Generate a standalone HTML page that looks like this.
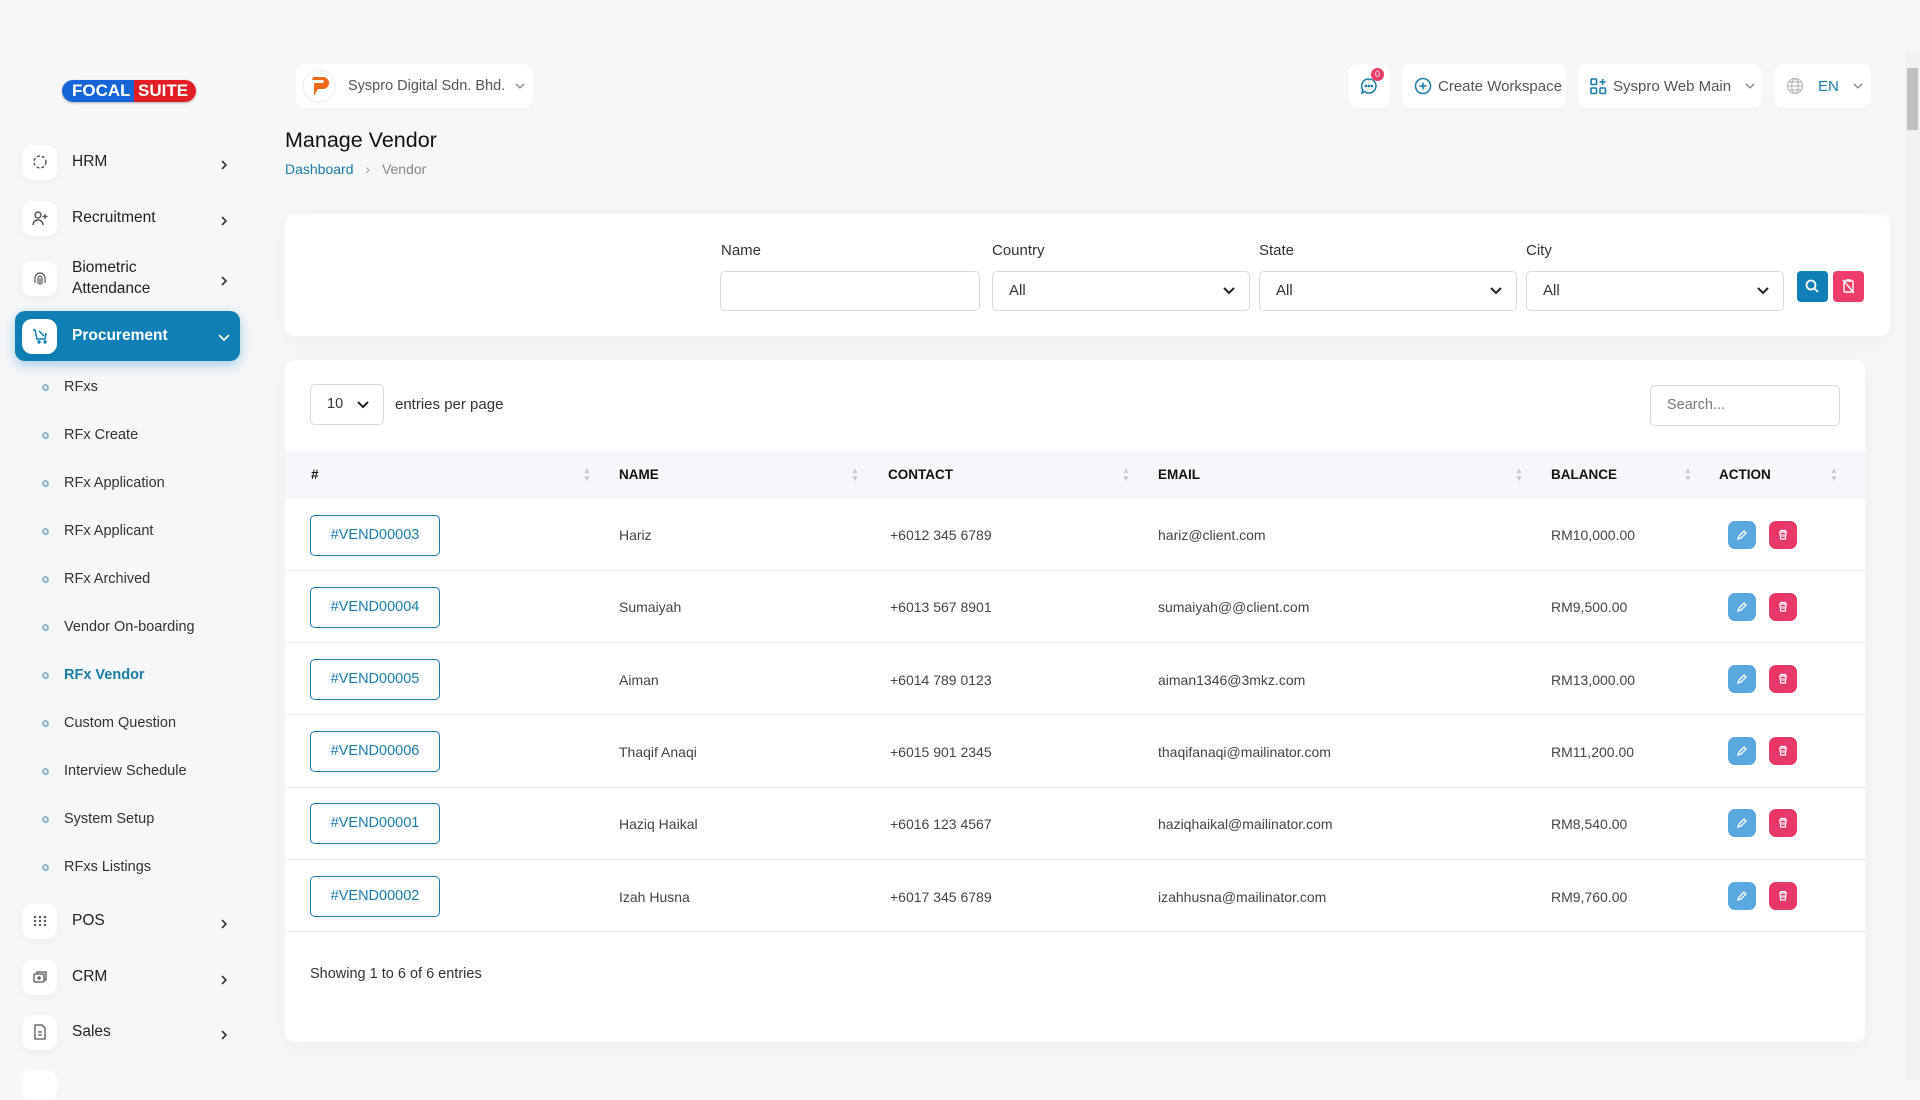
<!DOCTYPE html>
<html><head><meta charset="utf-8"><style>
*{box-sizing:border-box;margin:0;padding:0}
body{width:1920px;height:1080px;overflow:hidden;background:#f6f7f9;font-family:"Liberation Sans",sans-serif;color:#333;position:relative}
.abs{position:absolute}
.logo{left:62px;top:80px;height:22px;width:134px;border-radius:11px;display:flex;overflow:hidden;font-weight:bold;font-size:17px;color:#fff;line-height:22px;box-shadow:0 1px 2px rgba(0,0,0,.3)}
.logo .a{background:#1565d8;padding-left:10px;width:72px}
.logo .b{background:#e21d23;flex:1;padding-left:4px}
.nav{left:22px;width:218px;height:46px;display:flex;align-items:center;font-size:15.5px;color:#222}
.nav .ic{width:35px;height:35px;background:#fff;border-radius:10px;box-shadow:0 2px 8px rgba(0,0,0,.05);display:flex;align-items:center;justify-content:center;margin-right:15px}
.nav .ch{position:absolute;right:12px;top:50%;margin-top:-2px}
.act{left:15px;top:311px;width:225px;height:50px;background:#0f7fb5;border-radius:10px;box-shadow:0 4px 12px rgba(15,127,181,.35)}
.sub{left:42px;font-size:14.5px;color:#333;display:flex;align-items:center}
.sub i{width:7px;height:7px;border-radius:50%;border:2px solid #8fb6c9;margin-right:15px;display:inline-block}
.pill{background:#fff;border-radius:10px;height:44px;top:64px;display:flex;align-items:center;font-size:15px;color:#555;white-space:nowrap;box-shadow:0 1px 4px rgba(0,0,0,.03)}
.card{background:#fff;border-radius:10px;box-shadow:0 4px 20px rgba(0,0,0,.04)}
.lbl{font-size:15px;color:#333;top:242px}
.inp{top:271px;height:40px;border:1px solid #d6d9de;border-radius:5px;background:#fff;font-size:15px;padding-left:16px;line-height:38px;color:#333}
.inp .dv{position:absolute;right:14px;top:0}
.hd{left:285px;top:451px;width:1580px;height:48px;background:#f6f7fa}
.hc{top:451px;line-height:48px;font-size:13.5px;font-weight:bold;color:#111}
.srt{font-size:8px;color:#c5c8cc;line-height:8px;top:467px}
.row{left:285px;width:1580px;height:72px;border-bottom:1px solid #eceef0}
.cell{font-size:14px;color:#444}
.idb{left:310px;width:130px;height:41px;border:1px solid #1a7da8;border-radius:5px;color:#1a7da8;font-size:14.5px;text-align:center;line-height:39px}
.eb{width:28px;height:28px;border-radius:7px;background:#5aa8e0;left:1728px}
.db{width:28px;height:28px;border-radius:7px;background:#e8386a;left:1769px}
</style></head><body>

<div class="abs logo"><span class="a">FOCAL</span><span class="b">SUITE</span></div>

<svg width="0" height="0" style="position:absolute"><defs><path id="chv" d="M1 1l4 4-4 4" fill="none" stroke="#333" stroke-width="1.6"/></defs></svg>

<div class="abs nav" style="top:139px"><div class="ic"><svg width="18" height="18" viewBox="0 0 18 18" fill="none" stroke="#555" stroke-width="1.4" stroke-dasharray="3 2"><circle cx="9" cy="9" r="6"/></svg></div>HRM<svg class="ch" width="7" height="10"><use href="#chv"/></svg></div>
<div class="abs nav" style="top:195px"><div class="ic"><svg width="18" height="18" viewBox="0 0 18 18" fill="none" stroke="#555" stroke-width="1.4"><circle cx="7" cy="6" r="3"/><path d="M2 16c0-3 2-5 5-5s5 2 5 5M14 5v5M11.5 7.5h5"/></svg></div>Recruitment<svg class="ch" width="7" height="10"><use href="#chv"/></svg></div>
<div class="abs nav" style="top:253px;height:50px"><div class="ic"><svg width="18" height="18" viewBox="0 0 18 18" fill="none" stroke="#555" stroke-width="1.2"><path d="M4 14V9a5 5 0 0110 0v5M7 15V9a2 2 0 014 0v6M9 9v7"/></svg></div><span style="line-height:21px">Biometric<br>Attendance</span><svg class="ch" width="7" height="10"><use href="#chv"/></svg></div>
<div class="abs act"></div>
<div class="abs nav" style="top:313px;color:#fff;font-weight:bold"><div class="ic"><svg width="18" height="18" viewBox="0 0 18 18" fill="none" stroke="#0f7fb5" stroke-width="1.5"><path d="M2 3h2l2 9h8l1-6M8 4l5 5M7 15a1 1 0 100-.1M13 15a1 1 0 100-.1"/></svg></div>Procurement<svg class="ch" width="12" height="8" style="right:10px"><path d="M1 1l5 5 5-5" fill="none" stroke="#fff" stroke-width="1.6"/></svg></div>

<div class="abs sub" style="top:379px"><i></i>RFxs</div>
<div class="abs sub" style="top:427px"><i></i>RFx Create</div>
<div class="abs sub" style="top:475px"><i></i>RFx Application</div>
<div class="abs sub" style="top:523px"><i></i>RFx Applicant</div>
<div class="abs sub" style="top:571px"><i></i>RFx Archived</div>
<div class="abs sub" style="top:619px"><i></i>Vendor On-boarding</div>
<div class="abs sub" style="top:667px;color:#1a7da8;font-weight:bold"><i></i>RFx Vendor</div>
<div class="abs sub" style="top:715px"><i></i>Custom Question</div>
<div class="abs sub" style="top:763px"><i></i>Interview Schedule</div>
<div class="abs sub" style="top:811px"><i></i>System Setup</div>
<div class="abs sub" style="top:859px"><i></i>RFxs Listings</div>

<div class="abs nav" style="top:898px"><div class="ic"><svg width="18" height="18" viewBox="0 0 18 18" fill="#555"><circle cx="4" cy="5" r="1.2"/><circle cx="9" cy="5" r="1.2"/><circle cx="14" cy="5" r="1.2"/><circle cx="4" cy="9" r="1.2"/><circle cx="9" cy="9" r="1.2"/><circle cx="14" cy="9" r="1.2"/><circle cx="4" cy="13" r="1.2"/><circle cx="9" cy="13" r="1.2"/><circle cx="14" cy="13" r="1.2"/></svg></div>POS<svg class="ch" width="7" height="10"><use href="#chv"/></svg></div>
<div class="abs nav" style="top:954px"><div class="ic"><svg width="18" height="18" viewBox="0 0 18 18" fill="none" stroke="#555" stroke-width="1.3"><rect x="3" y="6" width="10" height="8" rx="1"/><path d="M6 6V4h9v8h-2M6 10h4M8 8v4"/></svg></div>CRM<svg class="ch" width="7" height="10"><use href="#chv"/></svg></div>
<div class="abs nav" style="top:1009px"><div class="ic"><svg width="18" height="18" viewBox="0 0 18 18" fill="none" stroke="#555" stroke-width="1.3"><path d="M4 2h7l3 3v11H4zM7 9h4M7 12h4"/></svg></div>Sales<svg class="ch" width="7" height="10"><use href="#chv"/></svg></div>
<div class="abs" style="left:22px;top:1070px;width:35px;height:30px;background:#fff;border-radius:10px"></div>

<!-- topbar -->
<div class="abs pill" style="left:296px;width:237px;font-size:14.5px"><svg style="margin:0 12px 0 6px" width="34" height="34" viewBox="0 0 34 34"><circle cx="17" cy="17" r="16" fill="#fff" stroke="#e6eaf0"/><path d="M11 8h10a6 6 0 010 12h-5l-4 7V14h9a2 2 0 000-3H10z" fill="#f06a1c"/></svg>Syspro Digital Sdn. Bhd.<svg style="margin-left:10px" width="10" height="7"><path d="M1 1l4 4 4-4" fill="none" stroke="#888" stroke-width="1.3"/></svg></div>
<div class="abs pill" style="left:1348px;width:42px;justify-content:center"><svg width="20" height="20" viewBox="0 0 20 20" fill="none" stroke="#1a7da8" stroke-width="1.5"><path d="M10 3a7 7 0 11-4.5 12.4L3 17l.8-3.2A7 7 0 0110 3z"/><circle cx="7" cy="10" r=".6" fill="#1a7da8"/><circle cx="10" cy="10" r=".6" fill="#1a7da8"/><circle cx="13" cy="10" r=".6" fill="#1a7da8"/></svg></div>
<div class="abs" style="left:1371px;top:68px;width:13px;height:13px;border-radius:50%;background:#ee3d6a;color:#fff;font-size:9px;text-align:center;line-height:13px">0</div>
<div class="abs pill" style="left:1402px;width:164px;padding-left:12px"><svg width="18" height="18" viewBox="0 0 18 18" fill="none" stroke="#1a7da8" stroke-width="1.5" style="margin-right:6px"><circle cx="9" cy="9" r="7.5"/><path d="M9 5.5v7M5.5 9h7"/></svg>Create Workspace</div>
<div class="abs pill" style="left:1578px;width:184px;padding-left:12px"><svg width="17" height="17" viewBox="0 0 17 17" fill="none" stroke="#1a7da8" stroke-width="1.6" style="margin-right:6px"><rect x="1" y="1" width="5.5" height="5.5" rx="1"/><rect x="1" y="10" width="5.5" height="5.5" rx="1"/><rect x="10" y="10" width="5.5" height="5.5" rx="1"/><path d="M12.7 1v6M9.7 4h6"/></svg>Syspro Web Main<svg style="margin-left:14px" width="10" height="7"><path d="M1 1l4 4 4-4" fill="none" stroke="#888" stroke-width="1.3"/></svg></div>
<div class="abs pill" style="left:1774px;width:97px;padding-left:12px;color:#1a7da8"><svg width="18" height="18" viewBox="0 0 18 18" fill="none" stroke="#bbb" stroke-width="1.2" style="margin-right:14px"><circle cx="9" cy="9" r="7.5"/><ellipse cx="9" cy="9" rx="3.3" ry="7.5"/><path d="M1.5 9h15M3 5h12M3 13h12"/></svg>EN<svg style="margin-left:14px" width="10" height="7"><path d="M1 1l4 4 4-4" fill="none" stroke="#888" stroke-width="1.3"/></svg></div>
<div class="abs" style="left:1905px;top:52px;width:15px;height:1028px;background:#f1f1f1"></div>
<div class="abs" style="left:1907px;top:68px;width:11px;height:62px;background:#c1c1c1"></div>

<div class="abs" style="left:285px;top:128px;font-size:21.5px;color:#111">Manage Vendor</div>
<div class="abs" style="left:285px;top:161px;font-size:14px;color:#1a7da8">Dashboard <span style="color:#999;margin:0 8px">&#x203A;</span> <span style="color:#888">Vendor</span></div>

<!-- filter -->
<div class="abs card" style="left:285px;top:214px;width:1605px;height:122px"></div>
<div class="abs lbl" style="left:721px">Name</div>
<div class="abs lbl" style="left:992px">Country</div>
<div class="abs lbl" style="left:1259px">State</div>
<div class="abs lbl" style="left:1526px">City</div>
<div class="abs inp" style="left:720px;width:260px"></div>
<div class="abs inp" style="left:992px;width:258px">All<span class="dv"><svg width="12" height="38" viewBox="0 0 12 38"><path d="M1 16l5 5 5-5" fill="none" stroke="#222" stroke-width="2"/></svg></span></div>
<div class="abs inp" style="left:1259px;width:258px">All<span class="dv"><svg width="12" height="38" viewBox="0 0 12 38"><path d="M1 16l5 5 5-5" fill="none" stroke="#222" stroke-width="2"/></svg></span></div>
<div class="abs inp" style="left:1526px;width:258px">All<span class="dv"><svg width="12" height="38" viewBox="0 0 12 38"><path d="M1 16l5 5 5-5" fill="none" stroke="#222" stroke-width="2"/></svg></span></div>
<div class="abs" style="left:1797px;top:271px;width:31px;height:31px;background:#0f7fb5;border-radius:4px"><svg width="31" height="31" viewBox="0 0 31 31" fill="none" stroke="#fff" stroke-width="1.8"><circle cx="14" cy="14" r="4.5"/><path d="M17.5 17.5l3.5 3.5"/></svg></div>
<div class="abs" style="left:1833px;top:271px;width:31px;height:31px;background:#ee3d6a;border-radius:4px"><svg width="31" height="31" viewBox="0 0 31 31" fill="none" stroke="#fff" stroke-width="1.4"><rect x="11" y="10" width="9" height="11" rx="1"/><path d="M13 9h5M10 9l11 13"/></svg></div>

<!-- table card -->
<div class="abs card" style="left:285px;top:360px;width:1580px;height:682px"></div>
<div class="abs" style="left:310px;top:384px;width:74px;height:41px;border:1px solid #d6d9de;border-radius:5px;background:#fff;font-size:14.5px;line-height:39px;padding-left:16px">10<svg style="position:absolute;left:46px;top:15px" width="12" height="10" viewBox="0 0 12 10"><path d="M1 2l5 5 5-5" fill="none" stroke="#222" stroke-width="2"/></svg></div>
<div class="abs" style="left:395px;top:396px;font-size:15px;color:#333">entries per page</div>
<div class="abs" style="left:1650px;top:385px;width:190px;height:41px;border:1px solid #d6d9de;border-radius:5px;font-size:14.5px;color:#777;padding-left:16px;line-height:39px">Search...</div>

<div class="abs hd"></div>
<div class="abs hc" style="left:311px">#</div>
<div class="abs hc" style="left:619px">NAME</div>
<div class="abs hc" style="left:888px">CONTACT</div>
<div class="abs hc" style="left:1158px">EMAIL</div>
<div class="abs hc" style="left:1551px">BALANCE</div>
<div class="abs hc" style="left:1719px">ACTION</div>
<div class="abs srt" style="left:583px">&#9650;<br>&#9660;</div>
<div class="abs srt" style="left:851px">&#9650;<br>&#9660;</div>
<div class="abs srt" style="left:1122px">&#9650;<br>&#9660;</div>
<div class="abs srt" style="left:1515px">&#9650;<br>&#9660;</div>
<div class="abs srt" style="left:1684px">&#9650;<br>&#9660;</div>
<div class="abs srt" style="left:1830px">&#9650;<br>&#9660;</div>

<div class="abs row" style="top:499px"></div>
<div class="abs row" style="top:571px"></div>
<div class="abs row" style="top:643px"></div>
<div class="abs row" style="top:716px"></div>
<div class="abs row" style="top:788px"></div>
<div class="abs row" style="top:860px"></div>

<div class="abs idb" style="top:515px">#VEND00003</div>
<div class="abs cell" style="left:619px;top:527px">Hariz</div>
<div class="abs cell" style="left:890px;top:527px">+6012 345 6789</div>
<div class="abs cell" style="left:1158px;top:527px">hariz@client.com</div>
<div class="abs cell" style="left:1551px;top:527px">RM10,000.00</div>

<div class="abs idb" style="top:587px">#VEND00004</div>
<div class="abs cell" style="left:619px;top:599px">Sumaiyah</div>
<div class="abs cell" style="left:890px;top:599px">+6013 567 8901</div>
<div class="abs cell" style="left:1158px;top:599px">sumaiyah@@client.com</div>
<div class="abs cell" style="left:1551px;top:599px">RM9,500.00</div>

<div class="abs idb" style="top:659px">#VEND00005</div>
<div class="abs cell" style="left:619px;top:672px">Aiman</div>
<div class="abs cell" style="left:890px;top:672px">+6014 789 0123</div>
<div class="abs cell" style="left:1158px;top:672px">aiman1346@3mkz.com</div>
<div class="abs cell" style="left:1551px;top:672px">RM13,000.00</div>

<div class="abs idb" style="top:731px">#VEND00006</div>
<div class="abs cell" style="left:619px;top:744px">Thaqif Anaqi</div>
<div class="abs cell" style="left:890px;top:744px">+6015 901 2345</div>
<div class="abs cell" style="left:1158px;top:744px">thaqifanaqi@mailinator.com</div>
<div class="abs cell" style="left:1551px;top:744px">RM11,200.00</div>

<div class="abs idb" style="top:803px">#VEND00001</div>
<div class="abs cell" style="left:619px;top:816px">Haziq Haikal</div>
<div class="abs cell" style="left:890px;top:816px">+6016 123 4567</div>
<div class="abs cell" style="left:1158px;top:816px">haziqhaikal@mailinator.com</div>
<div class="abs cell" style="left:1551px;top:816px">RM8,540.00</div>

<div class="abs idb" style="top:876px">#VEND00002</div>
<div class="abs cell" style="left:619px;top:889px">Izah Husna</div>
<div class="abs cell" style="left:890px;top:889px">+6017 345 6789</div>
<div class="abs cell" style="left:1158px;top:889px">izahhusna@mailinator.com</div>
<div class="abs cell" style="left:1551px;top:889px">RM9,760.00</div>

<div class="abs eb" style="top:521px"></div><div class="abs db" style="top:521px"></div>
<div class="abs eb" style="top:593px"></div><div class="abs db" style="top:593px"></div>
<div class="abs eb" style="top:665px"></div><div class="abs db" style="top:665px"></div>
<div class="abs eb" style="top:737px"></div><div class="abs db" style="top:737px"></div>
<div class="abs eb" style="top:809px"></div><div class="abs db" style="top:809px"></div>
<div class="abs eb" style="top:882px"></div><div class="abs db" style="top:882px"></div>
<svg class="abs" style="left:0;top:0" width="1920" height="1080">
<defs>
<g id="pen"><path d="M-4 4l1-3 5-5 2 2-5 5z" fill="none" stroke="#fff" stroke-width="1.3"/></g>
<g id="bin"><path d="M-4-3h8M-2-3v-1.5h4V-3M-3-3l.6 7h4.8l.6-7M-1-1v3M1-1v3" fill="none" stroke="#fff" stroke-width="1.2"/></g>
</defs>
<use href="#pen" x="1742" y="535"/><use href="#bin" x="1783" y="535"/>
<use href="#pen" x="1742" y="607"/><use href="#bin" x="1783" y="607"/>
<use href="#pen" x="1742" y="679"/><use href="#bin" x="1783" y="679"/>
<use href="#pen" x="1742" y="751"/><use href="#bin" x="1783" y="751"/>
<use href="#pen" x="1742" y="823"/><use href="#bin" x="1783" y="823"/>
<use href="#pen" x="1742" y="896"/><use href="#bin" x="1783" y="896"/>
</svg>

<div class="abs" style="left:310px;top:966px;font-size:14.5px;color:#333">Showing 1 to 6 of 6 entries</div>
</body></html>
